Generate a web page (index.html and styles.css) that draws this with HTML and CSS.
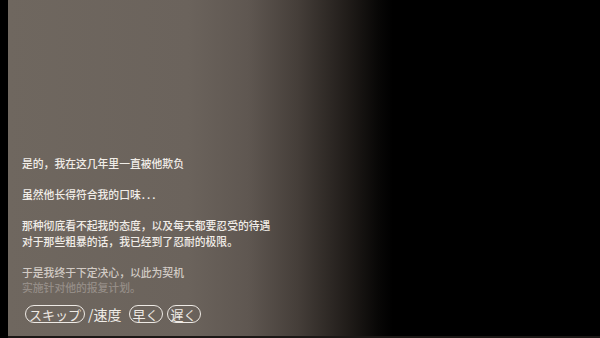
FILE: index.html
```html
<!DOCTYPE html>
<html lang="zh">
<head>
  <meta charset="UTF-8">
  <meta name="viewport" content="width=device-width, initial-scale=1.0">
  <title>Message Window</title>
  <link rel="stylesheet" href="styles.css">
</head>
<body>

  <div class="screen">
    <!-- Scrolling story text -->
    <div class="story">
      <p>是的，我在这几年里一直被他欺负</p>
      <p>虽然他长得符合我的口味<span class="dots">...</span></p>
      <p>那种彻底看不起我的态度，以及每天都要忍受的待遇<br>对于那些粗暴的话，我已经到了忍耐的极限。</p>
      <p><span class="fade-1">于是我终于下定决心，以此为契机</span><br><span class="fade-2">实施针对他的报复计划。</span></p>
    </div>

    <!-- Skip / speed controls -->
    <div class="controls" lang="ja">
      <button class="pill">スキップ</button>
      <span class="slash">/速度</span>
      <button class="pill">早く</button>
      <button class="pill">遅く</button>
    </div>
  </div>
  <div class="bottom-bar"></div>

</body>
</html>
```

FILE: styles.css
```css
/* General Reset */
* {
  margin: 0;
  padding: 0;
  box-sizing: border-box;
}

body {
  background-color: #000;
  font-family: 'Noto Sans CJK SC', 'Noto Sans CJK JP', sans-serif;
  color: #f1ede8;
  width: 600px;
  height: 338px;
  overflow: hidden;
}

.screen {
  margin-left: 8px;
  height: 336px;
  display: flex;
  flex-direction: column;
  justify-content: flex-end;
  padding: 0 0 13px 14px;
  background: linear-gradient(to right,
    #6f675f 0px,
    #6b635c 180px,
    #5f5751 240px,
    #453e39 290px,
    #201c19 340px,
    #080706 370px,
    #000 385px);
}

.bottom-bar {
  height: 2px;
  margin-left: 8px;
  background-color: #1b1816;
}

.story {
  font-size: 10.8px;
  font-weight: 500;
  line-height: 15.6px;
}

.story p {
  margin-bottom: 15.6px;
}

.story p:last-child {
  margin-bottom: 0;
}

.dots {
  letter-spacing: 2px;
  margin-left: 1px;
}

.fade-1 {
  color: #d2cbc5;
}

.fade-2 {
  color: #958d87;
}

.controls {
  display: flex;
  align-items: center;
  gap: 4px;
  margin-top: 9px;
  height: 18px;
  padding-left: 3px;
  font-family: 'Noto Sans CJK JP', sans-serif;
}

.pill {
  height: 18px;
  padding: 0 3px;
  background: transparent;
  border: 1.5px solid #eeeae5;
  border-radius: 9px;
  color: #eeeae5;
  font-family: 'Noto Sans CJK JP', sans-serif;
  font-size: 13px;
  line-height: 15px;
  cursor: pointer;
}

.slash {
  font-size: 14px;
  line-height: 18px;
  color: #f1ede8;
  margin: 0 3px 0 -1px;
}
```
